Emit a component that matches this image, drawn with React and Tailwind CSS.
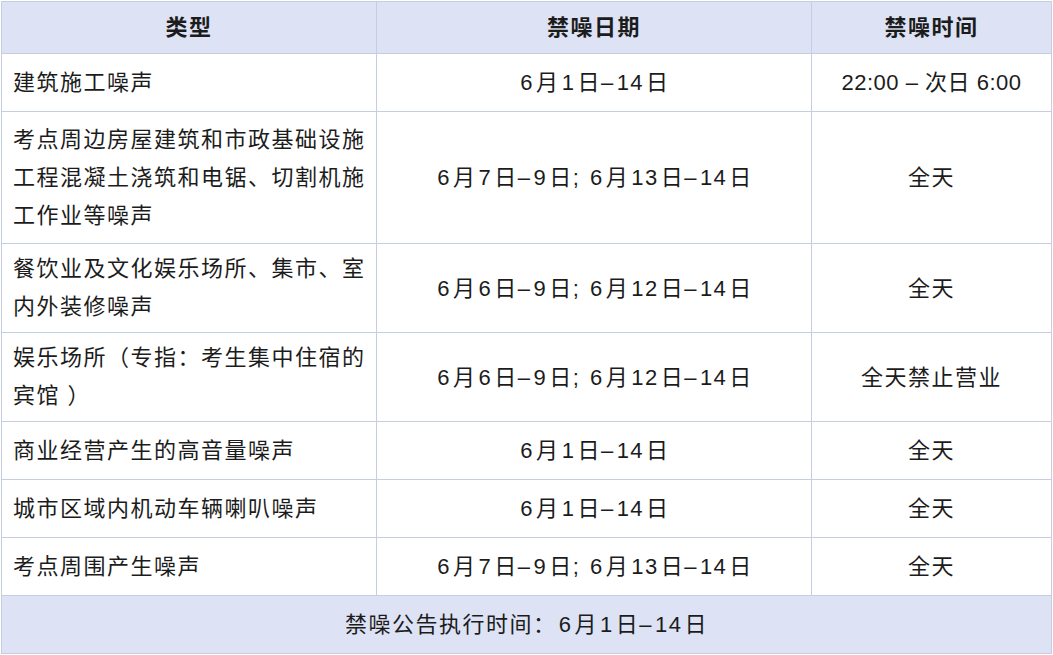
const rows = [
  { type: ['建筑施工噪声'], date: '6月1日–14日', time: '22:00 – 次日 6:00', h: 'h-[58px]' },
  { type: ['考点周边房屋建筑和市政基础设施', '工程混凝土浇筑和电锯、切割机施', '工作业等噪声'], date: '6月7日–9日; 6月13日–14日', time: '全天', h: 'h-[132px]' },
  { type: ['餐饮业及文化娱乐场所、集市、室', '内外装修噪声'], date: '6月6日–9日; 6月12日–14日', time: '全天', h: 'h-[89px]' },
  { type: ['娱乐场所（专指：考生集中住宿的', '宾馆 ）'], date: '6月6日–9日; 6月12日–14日', time: '全天禁止营业', h: 'h-[89px]' },
  { type: ['商业经营产生的高音量噪声'], date: '6月1日–14日', time: '全天', h: 'h-[58px]' },
  { type: ['城市区域内机动车辆喇叭噪声'], date: '6月1日–14日', time: '全天', h: 'h-[58px]' },
  { type: ['考点周围产生噪声'], date: '6月7日–9日; 6月13日–14日', time: '全天', h: 'h-[58px]' },
];

// digits sit a bit apart from the CJK characters
function Spaced({ text }) {
  return text.split(/(\d+)/).map((p, i) =>
    /^\d+$/.test(p) ? <span key={i} className="mx-[2px]">{p}</span> : <span key={i}>{p}</span>
  );
}

export default function App() {
  return (
    <div className="w-[1053px] h-[655px] bg-white p-[1px] font-['Liberation_Sans','Noto_Sans_CJK_SC',sans-serif] text-[22px] tracking-[1.5px] text-[#1c1c1c]">
      <table className="w-full border-collapse table-fixed">
        <colgroup>
          <col className="w-[375px]" />
          <col className="w-[435px]" />
          <col />
        </colgroup>
        <thead>
          <tr className="h-[52px] bg-[#dde3f4]">
            <th className="border border-[#c5cde0] font-bold text-center">类型</th>
            <th className="border border-[#c5cde0] font-bold text-center">禁噪日期</th>
            <th className="border border-[#c5cde0] font-bold text-center">禁噪时间</th>
          </tr>
        </thead>
        <tbody>
          {rows.map((r, i) => (
            <tr key={i} className={r.h}>
              <td className="border border-[#c5cde0] pl-[11px] pr-1 leading-[38px] text-left">
                {r.type.map((t, j) => (
                  <div key={j} className="whitespace-nowrap">{t}</div>
                ))}
              </td>
              <td className="border border-[#c5cde0] text-center whitespace-nowrap">
                <Spaced text={r.date} />
              </td>
              <td className="border border-[#c5cde0] text-center whitespace-nowrap">
                {i === 0 ? <span className="tracking-[0.5px]">{r.time}</span> : r.time}
              </td>
            </tr>
          ))}
          <tr className="h-[58px] bg-[#dde3f4]">
            <td colSpan={3} className="border border-[#c5cde0] text-center">
              <Spaced text="禁噪公告执行时间：6月1日–14日" />
            </td>
          </tr>
        </tbody>
      </table>
    </div>
  );
}
